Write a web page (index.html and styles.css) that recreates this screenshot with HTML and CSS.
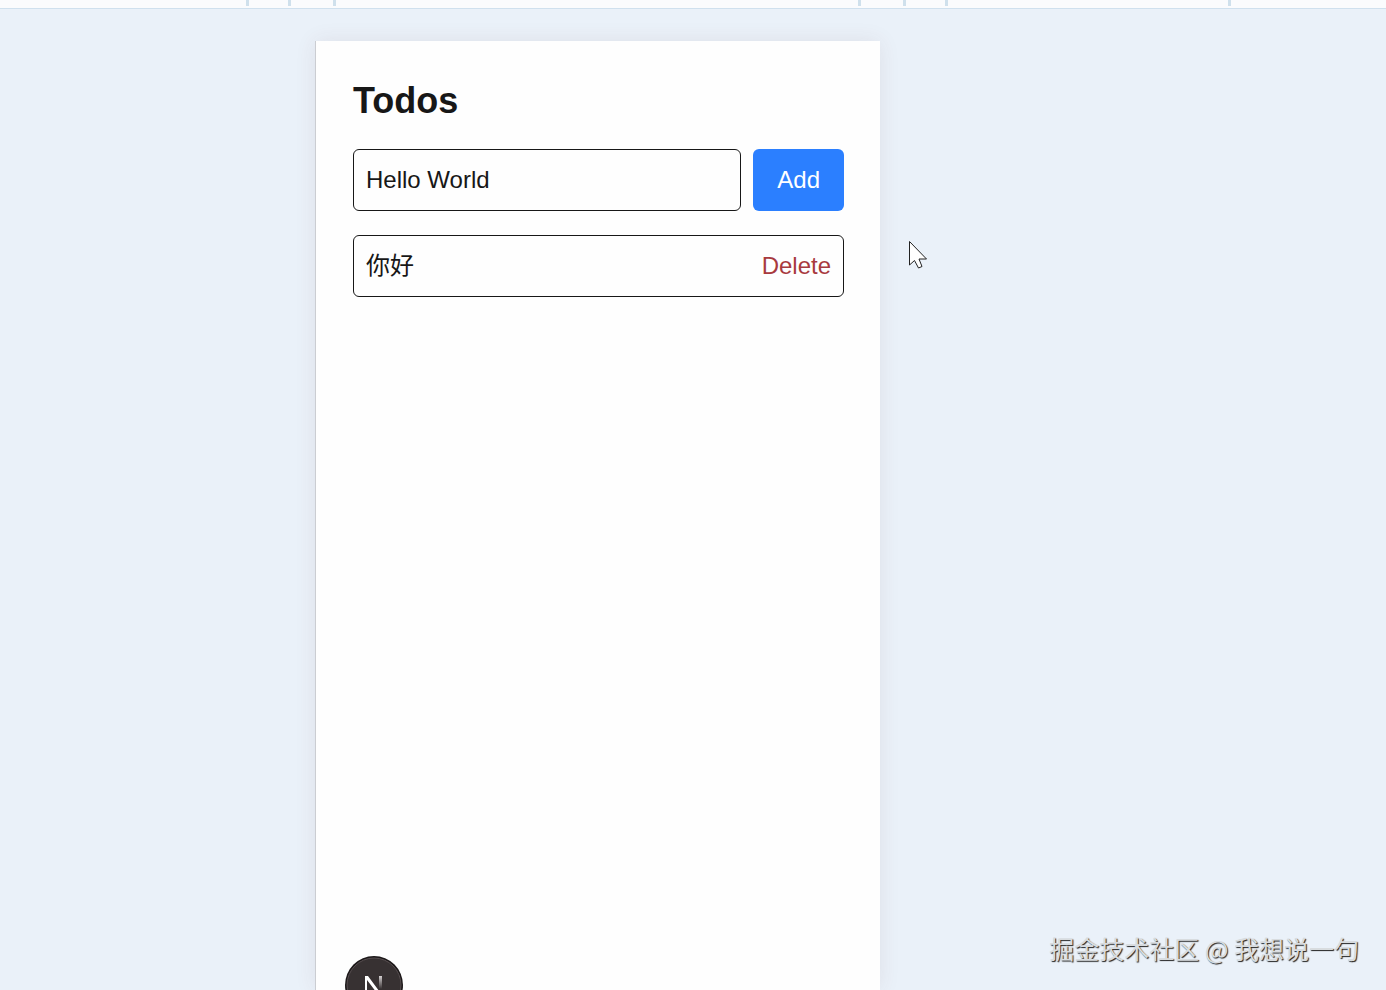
FILE: index.html
```html
<!DOCTYPE html>
<html lang="en">
<head>
    <meta charset="UTF-8">
    <meta name="viewport" content="width=device-width, initial-scale=1.0">
    <title>Todos</title>
    <link rel="stylesheet" href="styles.css">
</head>
<body>

<div class="ruler">
    <svg class="ticks" width="100%" height="6" fill="#cfe0ec" aria-hidden="true">
        <rect x="246" width="3" height="6"/>
        <rect x="288" width="3" height="6"/>
        <rect x="333" width="3" height="6"/>
        <rect x="858" width="3" height="6"/>
        <rect x="903" width="3" height="6"/>
        <rect x="945" width="3" height="6"/>
        <rect x="1228" width="3" height="6"/>
    </svg>
</div>

<div class="stage">
    <main class="device">
        <h1>Todos</h1>
        <form class="add-form" onsubmit="addTodo(event)">
            <input type="text" id="todo" value="Hello World" aria-label="New todo" autocomplete="off">
            <button type="submit" class="add">Add</button>
        </form>
        <ul class="todos" id="todos">
            <li class="todo">
                <span lang="zh-CN">你好</span>
                <button type="button" class="delete" onclick="this.parentNode.remove()">Delete</button>
            </li>
        </ul>
        <button type="button" class="dev-badge" aria-label="Dev tools">
            <svg width="58" height="58" viewBox="0 0 58 58" aria-hidden="true">
                <defs>
                    <linearGradient id="fade" x1="0" y1="0" x2="0" y2="1">
                        <stop offset="0" stop-color="#d4d0d1"/>
                        <stop offset="1" stop-color="#373132"/>
                    </linearGradient>
                </defs>
                <circle cx="29" cy="29" r="29" fill="#1c1819"/>
                <circle cx="29" cy="29" r="27" fill="#373132" stroke="#574e50"/>
                <path d="M20 20H23L40 43L38 45L22 24V40H20Z" fill="#fff"/>
                <rect x="34" y="20" width="3" height="13" fill="url(#fade)"/>
            </svg>
        </button>
    </main>
</div>

<svg class="cursor" width="20" height="30" viewBox="0 0 20 30" aria-hidden="true">
    <path d="M1.500 1.500V25L6.500 20.500L10.500 28L14 26.500L11 19H18.500Z" fill="#fff" stroke="#222" stroke-width="1"/>
</svg>

<div class="watermark" lang="zh-CN">掘金技术社区 @ 我想说一句</div>

<script>
    function addTodo(event) {
        event.preventDefault();
        const input = document.getElementById('todo');
        const text = input.value.trim();
        if (!text) return;

        const item = document.createElement('li');
        item.className = 'todo';

        const label = document.createElement('span');
        label.textContent = text;
        item.appendChild(label);

        const button = document.createElement('button');
        button.type = 'button';
        button.className = 'delete';
        button.textContent = 'Delete';
        button.onclick = () => item.remove();
        item.appendChild(button);

        document.getElementById('todos').appendChild(item);
        input.value = '';
    }
</script>

</body>
</html>
```
FILE: styles.css
```css
* {
    box-sizing: border-box;
}
body {
    margin: 0;
    height: 100vh;
    display: flex;
    flex-direction: column;
    position: relative;
    overflow: hidden;
    background-color: #eaf1f9;
    color: #171717;
    font-family: "Liberation Sans", "Noto Sans CJK SC", Arial, sans-serif;
    font-size: 24px;
    line-height: 36px;
}
.ruler {
    height: 9px;
    background-color: #fafbfd;
    border-bottom: 1px solid #cfe0ee;
}
.ticks {
    display: block;
}
.stage {
    flex: 1;
    display: flex;
    justify-content: center;
    padding: 32px 191px 0 0;
}
.device {
    position: relative;
    width: 100%;
    max-width: 565px;
    padding: 36px 36px 36px 37px;
    background-color: #fefefe;
    border-left: 1px solid #cbcdd2;
    box-shadow: 0 0 20px rgba(110, 50, 60, 0.09);
}
h1 {
    margin: 0 0 24px;
    font-size: 36px;
    line-height: 48px;
}
.add-form {
    display: flex;
    gap: 12px;
    margin-bottom: 24px;
}
input {
    flex: 1;
    min-width: 0;
}
input, .todo {
    padding: 12px;
    border: 1px solid #171717;
    border-radius: 6px;
    background-color: #fefefe;
    color: #171717;
}
input, button {
    font: inherit;
}
button {
    border: 0;
    cursor: pointer;
}
.add {
    padding: 13px 24px;
    border-radius: 6px;
    background-color: #2b7fff;
    color: #fff;
}
.todos {
    display: flex;
    flex-direction: column;
    gap: 12px;
    margin: 0;
    padding: 0;
    list-style: none;
}
.todo {
    display: flex;
    justify-content: space-between;
}
.delete {
    padding: 0;
    background: none;
    color: #a83a3e;
}
.dev-badge {
    position: absolute;
    left: 29px;
    bottom: -24px;
    padding: 0;
    background: none;
}
.dev-badge svg {
    display: block;
}
.cursor {
    position: absolute;
    left: 908px;
    top: 240px;
}
.watermark {
    position: absolute;
    right: 27px;
    bottom: 24px;
    color: #d8dcdf;
    font-family: "Noto Sans CJK SC", sans-serif;
    font-size: 25px;
    text-shadow: 1px 1px 1px #222;
}
```
